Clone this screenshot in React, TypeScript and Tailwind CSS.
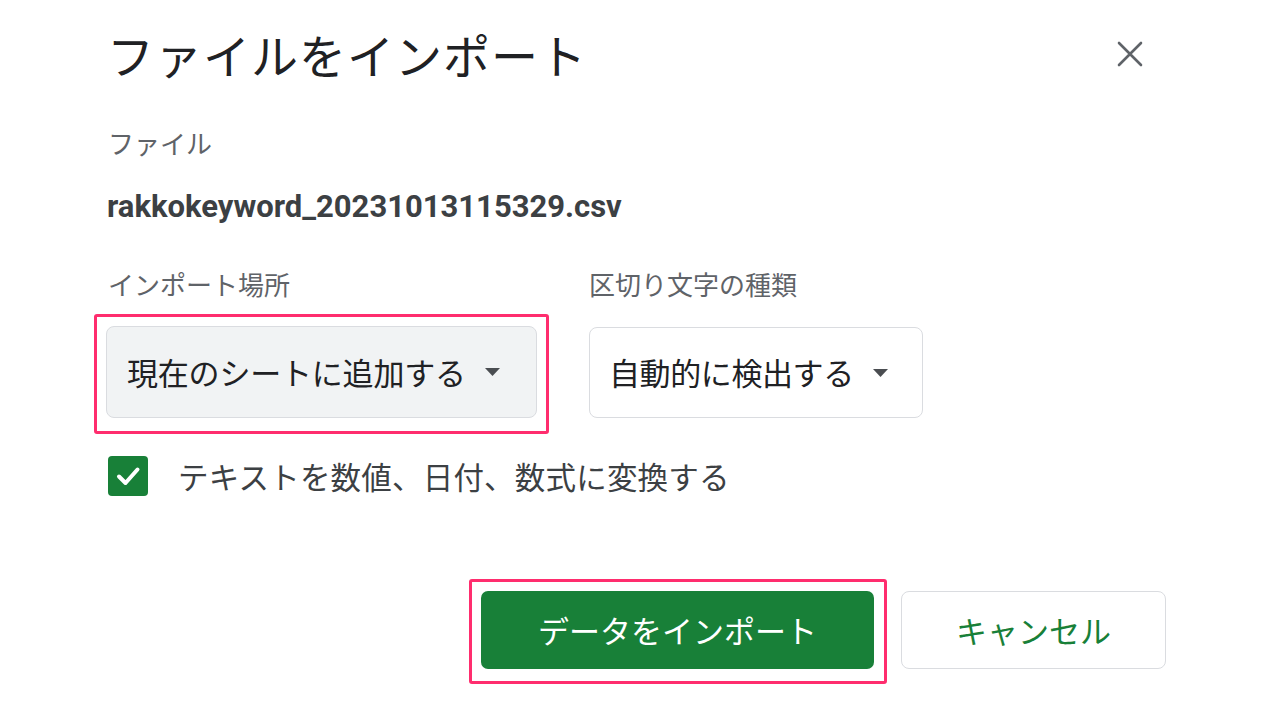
import React from "react";

const jp = { fontFamily: '"Noto Sans CJK JP", "Noto Sans", sans-serif' };

function Caret() {
  return (
    <svg width="15" height="8" viewBox="0 0 15 8" className="shrink-0">
      <path d="M0 0 L15 0 L7.5 8 Z" fill="#4a4d51" />
    </svg>
  );
}

export default function App() {
  return (
    <div className="w-[1280px] h-[720px] bg-white overflow-hidden" style={jp}>
      <div className="ml-[107px] w-[1059px] flex flex-col">
        {/* Title row */}
        <div className="mt-[26px] flex items-center justify-between">
          <h1 className="text-[47px] leading-[56px] text-[#202124] font-normal tracking-[1px]">
            ファイルをインポート
          </h1>
          <button className="w-[48px] h-[48px] mr-[12px] flex items-center justify-center">
            <svg width="26" height="26" viewBox="0 0 26 26">
              <path d="M2 2 L24 24 M24 2 L2 24" stroke="#5f6368" strokeWidth="2.6" strokeLinecap="round" />
            </svg>
          </button>
        </div>

        <div className="mt-[45px] ml-[1px] text-[26px] leading-[32px] text-[#5f6368]">ファイル</div>

        <div
          className="mt-[30px] text-[31px] leading-[36px] font-bold text-[#3c4043]"
          style={{ fontFamily: 'Roboto, "Liberation Sans", sans-serif' }}
        >
          rakkokeyword_20231013115329.csv
        </div>

        {/* Selects */}
        <div className="mt-[43px] flex gap-[40px]">
          <div className="w-[442px] flex flex-col">
            <div className="ml-[1px] text-[26px] leading-[32px] text-[#5f6368]">インポート場所</div>
            <div className="mt-[14px] -ml-[13px] w-[455px] border-[3px] border-[#ff2d6e] rounded-[3px] px-[9px] pt-[9px] pb-[13px]">
              <div className="h-[92px] rounded-[8px] border-[1.5px] border-[#dadce0] bg-[#f1f3f4] flex items-center pl-[20px] gap-[19px]">
                <span className="text-[31px] text-[#202124] tracking-[-0.2px]">現在のシートに追加する</span>
                <Caret />
              </div>
            </div>
          </div>
          <div className="flex flex-col">
            <div className="text-[26px] leading-[32px] text-[#5f6368]">区切り文字の種類</div>
            <div className="mt-[27px] h-[91px] w-[334px] rounded-[8px] border-[1.5px] border-[#dadce0] bg-white flex items-center pl-[19px] gap-[19px]">
              <span className="text-[31px] text-[#202124] tracking-[-0.4px]">自動的に検出する</span>
              <Caret />
            </div>
          </div>
        </div>

        {/* Checkbox */}
        <div className="mt-[22px] ml-[1px] flex items-center gap-[30px]">
          <div className="w-[40px] h-[40px] rounded-[4px] bg-[#188038] flex items-center justify-center">
            <svg width="28" height="28" viewBox="0 0 28 28">
              <path d="M5 14.5 L11.5 21 L23.5 7.5" stroke="white" strokeWidth="4" fill="none" strokeLinecap="round" strokeLinejoin="round" />
            </svg>
          </div>
          <span className="text-[30.5px] leading-[40px] text-[#3c4043] tracking-[0.2px]">テキストを数値、日付、数式に変換する</span>
        </div>

        {/* Buttons */}
        <div className="mt-[83px] flex justify-end items-start gap-[14px]">
          <div className="border-[3px] border-[#ff2d6e] rounded-[3px] pl-[9px] pr-[10px] pt-[9px] pb-[12px]">
            <button className="w-[393px] h-[78px] rounded-[7px] bg-[#188038] text-white text-[31px] flex items-center justify-center">
              データをインポート
            </button>
          </div>
          <button className="mt-[12px] w-[265px] h-[78px] rounded-[8px] border-[1.5px] border-[#dadce0] bg-white text-[#188038] text-[31px] flex items-center justify-center">
            キャンセル
          </button>
        </div>
      </div>
    </div>
  );
}
